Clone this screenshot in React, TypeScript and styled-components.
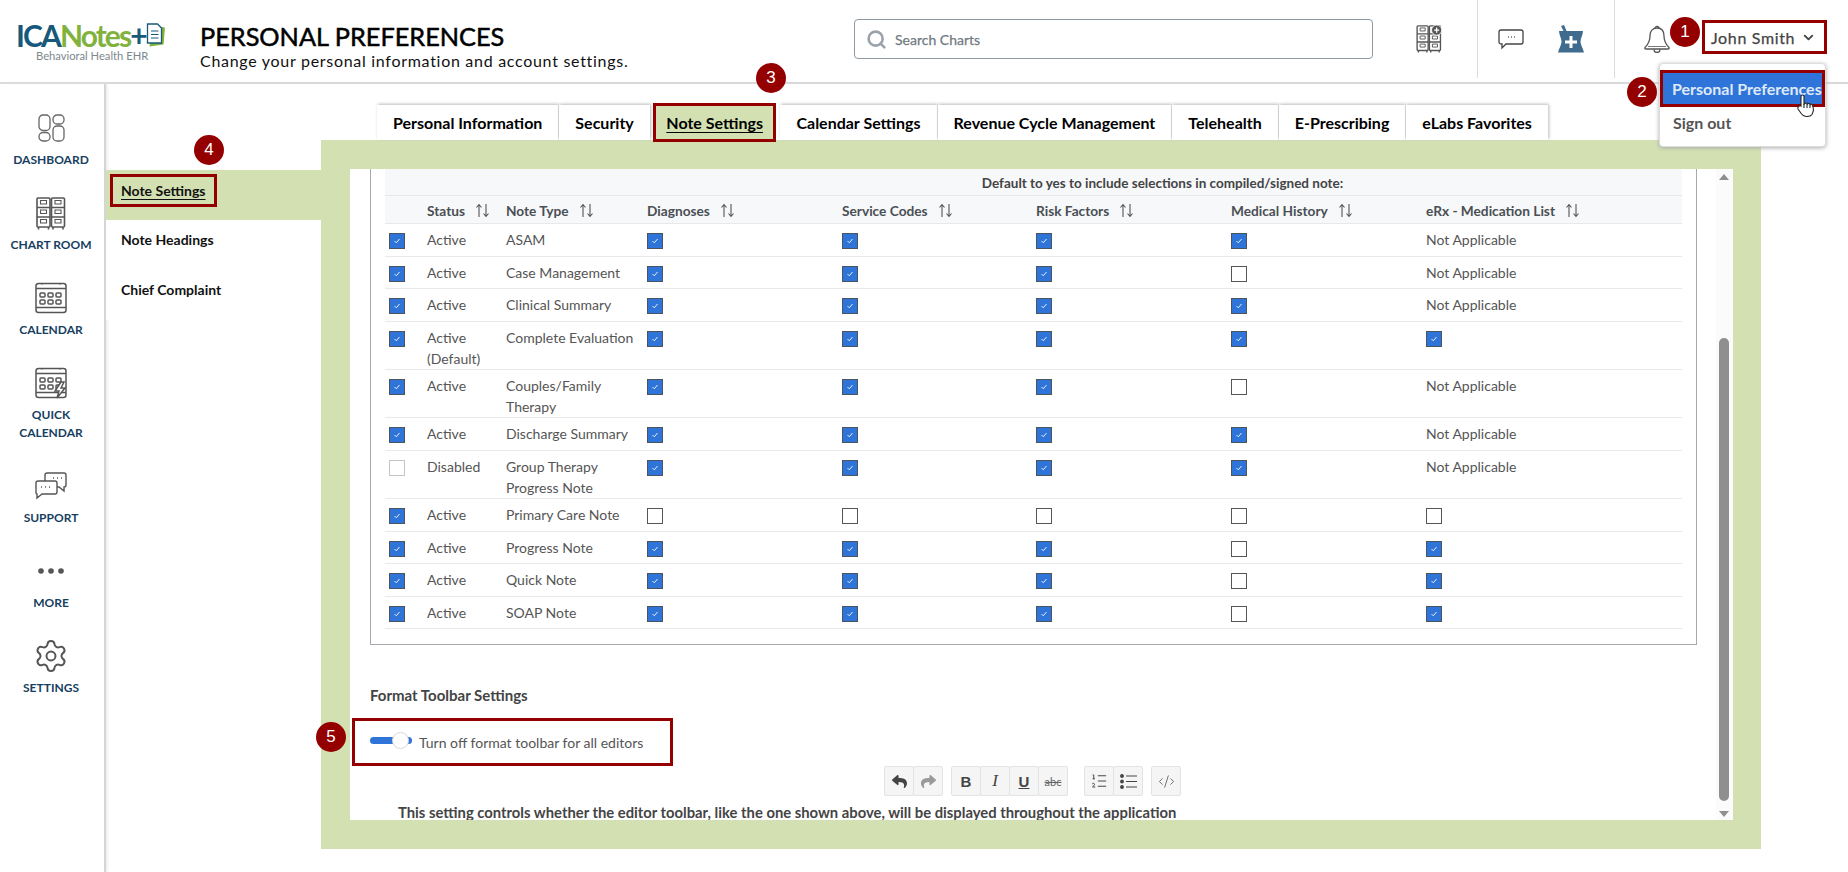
import React from "react";
import styled, { createGlobalStyle } from "styled-components";
import { ChevronDown, CodeXml, ListOrdered, Search, Settings } from "lucide-react";
import { FaReply, FaShare } from "react-icons/fa";

const GREEN = "#d3e1b2";
const RED = "#940000";

const Global = createGlobalStyle`
  html, body { margin: 0; padding: 0; background: #fff; }
  body { font-family: Lato, "Liberation Sans", sans-serif; font-size: 14px; color: #555; }
  * { box-sizing: border-box; }
`;

const Page = styled.div`
  position: relative;
  width: 1848px;
  height: 872px;
  overflow: hidden;
`;

const Header = styled.header`
  height: 84px;
  border-bottom: 2px solid #d9d9d9;
  display: flex;
  align-items: stretch;
`;
const LogoBox = styled.div`
  width: 200px;
  padding: 20px 0 0 16px;
`;
const LogoLine = styled.div`
  display: flex;
  align-items: center;
  height: 30px;
  font-size: 30px;
  font-weight: 700;
  letter-spacing: -1.9px;
  line-height: 30px;
`;
const LogoIca = styled.span`
  color: #17597a;
`;
const LogoNotes = styled.span`
  color: #82b23e;
`;
const LogoPlus = styled.span`
  color: #17597a;
`;
const LogoSub = styled.div`
  margin-left: 20px;
  font-size: 11.2px;
  line-height: 12px;
  color: #7d878d;
`;
const TitleBox = styled.div`
  width: 654px;
  padding-top: 22px;
`;
const Title = styled.h1`
  margin: 0;
  font-size: 25.3px;
  line-height: 29px;
  font-weight: 400;
  -webkit-text-stroke: 0.5px #000;
  color: #000;
`;
const Subtitle = styled.div`
  font-size: 16px;
  line-height: 19px;
  letter-spacing: 0.71px;
  color: #111;
`;
const SearchBox = styled.div`
  width: 519px;
  height: 40px;
  margin-top: 19px;
  border: 1px solid #8f99a3;
  border-radius: 4px;
  display: flex;
  align-items: center;
  gap: 8px;
  padding-left: 11px;
  font-size: 14px;
  -webkit-text-stroke: 0.25px #727a82;
  color: #727a82;
`;
const IconCell = styled.div<{ $w: number; $pl: number; $border?: boolean }>`
  width: ${(p) => p.$w}px;
  padding-left: ${(p) => p.$pl}px;
  height: 78px;
  display: flex;
  align-items: center;
  border-right: ${(p) => (p.$border ? "1px solid #dcdcdc" : "none")};
`;
const Spacer = styled.span`
  width: 34px;
`;
const UserBox = styled.div`
  width: 125px;
  height: 34px;
  margin: 20px 0 0 31px;
  border: 3px solid ${RED};
  display: flex;
  align-items: center;
  padding-left: 6px;
  gap: 6px;
  font-size: 16px;
  -webkit-text-stroke: 0.25px #444;
  color: #444;
  letter-spacing: 0.65px;
`;

const Body = styled.div`
  display: flex;
  height: 788px;
`;
const SideNav = styled.nav`
  width: 106px;
  padding: 24px 2px 0 0;
  border-right: 2px solid #d5d5d5;
  box-shadow: 1px 0 3px #e4e4e4;
  flex: none;
`;
const NavItem = styled.div`
  display: flex;
  flex-direction: column;
  align-items: center;
  padding-bottom: 24px;
`;
const NavIcon = styled.div`
  height: 40px;
  margin-bottom: 3px;
  display: flex;
  align-items: center;
  justify-content: center;
  color: #555;
`;
const NavLabel = styled.div`
  font-size: 12px;
  line-height: 18px;
  font-weight: 700;
  color: #17405f;
  text-align: center;
`;

const Content = styled.main`
  flex: 1;
  min-width: 0;
`;
const TabRow = styled.div`
  display: flex;
  align-items: flex-end;
  gap: 1px;
  height: 56px;
  padding-left: 271px;
`;
const Tab = styled.div<{ $active?: boolean }>`
  position: relative;
  z-index: 1;
  height: ${(p) => (p.$active ? 39 : 35)}px;
  margin: ${(p) => (p.$active ? "0 3px 0 2px" : "0")};
  padding: 0 ${(p) => (p.$active ? 10.5 : 16)}px;
  display: flex;
  align-items: center;
  font-size: 16px;
  font-weight: 700;
  color: #000;
  background: ${(p) => (p.$active ? GREEN : "#fff")};
  border: ${(p) => (p.$active ? `3px solid ${RED}` : "none")};
  box-shadow: ${(p) => (p.$active ? "none" : "1px -1px 3px #bbb")};
  transform: ${(p) => (p.$active ? "translateY(2px)" : "none")};
  text-decoration: ${(p) => (p.$active ? "underline" : "none")};
  text-underline-offset: 3px;
`;
const Lower = styled.div`
  display: flex;
`;
const SubMenu = styled.div`
  width: 215px;
  padding-top: 30px;
  flex: none;
`;
const SubItem = styled.div<{ $active?: boolean }>`
  height: 50px;
  display: flex;
  align-items: center;
  padding-left: ${(p) => (p.$active ? 4 : 15)}px;
  padding-bottom: ${(p) => (p.$active ? 10 : 12)}px;
  background: ${(p) => (p.$active ? GREEN : "#fff")};
  font-size: 14px;
  font-weight: 700;
  color: #111;
`;
const SubActiveText = styled.span`
  height: 33px;
  display: flex;
  align-items: center;
  padding: 0 8px;
  border: 3px solid ${RED};
  text-decoration: underline;
  text-underline-offset: 3px;
`;
const GreenPanel = styled.div`
  width: 1440px;
  height: 709px;
  padding: 29px 28px 29px 29px;
  background: ${GREEN};
`;
const WhitePanel = styled.div`
  height: 651px;
  display: flex;
  background: #fff;
`;
const Scroller = styled.div`
  flex: 1;
  min-width: 0;
  padding-left: 20px;
  overflow: hidden;
`;
const ScrollBar = styled.div`
  width: 17px;
  position: relative;
  background: #fbfbfb;
  flex: none;
`;
const ScrollThumb = styled.div`
  position: absolute;
  left: 3px;
  right: 4px;
  top: 169px;
  bottom: 19px;
  background: #8f8f8f;
  border-radius: 5px;
`;
const ScrollArrow = styled.div<{ $down?: boolean }>`
  position: absolute;
  left: 3px;
  ${(p) => (p.$down ? "bottom: 3px;" : "top: 5px;")}
  width: 0;
  height: 0;
  border-left: 5px solid transparent;
  border-right: 5px solid transparent;
  border-${(p) => (p.$down ? "top" : "bottom")}: 6px solid #8f8f8f;
`;
const Fieldset = styled.div`
  width: 1327px;
  height: 476px;
  padding: 0 14px;
  border: 1px solid #a4a9ad;
  border-top: none;
`;
const CaptionRow = styled.div`
  height: 27px;
  background: #f7f8fa;
  border-bottom: 1px solid #e6e8ea;
  font-size: 13.5px;
  font-weight: 700;
  color: #444;
  display: flex;
  align-items: center;
  justify-content: center;
  padding-top: 1px;
  padding-left: 258px;
`;
const COLS = "38px 79px 141px 195px 194px 195px 195px 1fr";
const HeadRow = styled.div`
  display: grid;
  grid-template-columns: ${COLS};
  height: 28px;
  background: #f7f8fa;
  border-bottom: 1px solid #e6e8ea;
`;
const HeadCell = styled.div`
  display: flex;
  align-items: center;
  gap: 10px;
  padding: 1px 0 0 4px;
  font-size: 13.7px;
  font-weight: 700;
  color: #4a4f54;
`;
const Row = styled.div<{ $tall?: boolean }>`
  display: grid;
  grid-template-columns: ${COLS};
  height: ${(p) => (p.$tall ? 48.4 : 32.5)}px;
  border-bottom: 1px solid #e8e9ea;
`;
const Cell = styled.div`
  padding: 5px 4px 0;
  line-height: 21px;
  font-size: 14px;
  color: #555;
`;
const BoxCell = styled.div`
  padding: 9px 0 0 3.5px;
`;
const Check = styled.span<{ $on?: boolean; $dim?: boolean }>`
  width: 16px;
  height: 16px;
  display: flex;
  align-items: center;
  justify-content: center;
  background: ${(p) => (p.$on ? "#2f74d8" : "#fff")};
  border: 1px solid ${(p) => (p.$on ? "#4a5560" : p.$dim ? "#c4c4c4" : "#555")};
`;
const SectionTitle = styled.div`
  margin-top: 40px;
  font-size: 15px;
  line-height: 20px;
  font-weight: 700;
  color: #444;
`;
const ToggleBox = styled.div`
  width: 321px;
  height: 48px;
  margin: 13px 0 0 -18px;
  padding: 0 0 0 15px;
  border: 3px solid ${RED};
  display: flex;
  align-items: center;
  gap: 7px;
  color: #555;
  font-size: 14px;
`;
const Toggle = styled.div`
  position: relative;
  width: 42px;
  height: 7px;
  border-radius: 4px;
  background: #2f74d8;
  margin-top: -4px;
`;
const Knob = styled.div`
  position: absolute;
  left: 22px;
  top: -5px;
  width: 17px;
  height: 17px;
  border-radius: 50%;
  background: #fff;
  border: 1px solid #d8d8d8;
`;
const Toolbar = styled.div`
  display: flex;
  margin: 0 0 0 514px;
`;
const ToolGroup = styled.div<{ $gap: number }>`
  display: flex;
  margin-right: ${(p) => p.$gap}px;
`;
const ToolBtn = styled.div<{ $dim?: boolean }>`
  width: 30px;
  height: 30px;
  display: flex;
  align-items: center;
  justify-content: center;
  background: #f5f5f5;
  border: 1px solid #e3e3e3;
  border-radius: 2px;
  margin-right: -1px;
  color: ${(p) => (p.$dim ? "#999" : "#444")};
  font-size: 14px;
`;
const Bold = styled.b`
  font-family: "Liberation Sans", sans-serif;
  font-size: 15px;
`;
const Italic = styled.i`
  font-family: "Liberation Serif", serif;
  font-size: 17px;
`;
const Under = styled.u`
  font-family: "Liberation Sans", sans-serif;
  font-weight: 700;
  font-size: 15px;
`;
const Strike = styled.s`
  font-size: 11px;
  color: #666;
`;
const Notice = styled.div`
  margin: 6px 0 0 28px;
  font-size: 14.8px;
  font-weight: 700;
  line-height: 20px;
  color: #444;
  white-space: nowrap;
`;

// overlays
const Marker = styled.div<{ $x: number; $y: number }>`
  position: absolute;
  left: ${(p) => p.$x - 15}px;
  top: ${(p) => p.$y - 15}px;
  width: 30px;
  height: 30px;
  border-radius: 50%;
  background: ${RED};
  color: #fff;
  font-family: "Liberation Sans", sans-serif;
  font-size: 17px;
  display: flex;
  align-items: center;
  justify-content: center;
  z-index: 5;
`;
const Dropdown = styled.div`
  position: absolute;
  left: 1659px;
  top: 63px;
  width: 167px;
  height: 84px;
  padding-top: 6px;
  background: #fff;
  border: 1px solid #ddd;
  border-radius: 4px;
  box-shadow: 0 1px 4px #aaa;
  z-index: 4;
`;
const DropActive = styled.div`
  height: 37px;
  border: 3px solid ${RED};
  background: #2f74d8;
  color: #dfe9f8;
  font-size: 16px;
  font-weight: 700;
  padding-left: 9px;
  line-height: 31px;
  white-space: nowrap;
  overflow: hidden;
`;
const DropItem = styled.div`
  padding: 3px 0 0 13px;
  font-size: 16px;
  line-height: 26px;
  font-weight: 700;
  color: #555;
`;
const Hand = styled.svg`
  position: absolute;
  left: 1796px;
  top: 94px;
  z-index: 6;
`;

const Dashboard = () => (
  <svg width="27" height="28" viewBox="0 0 27 28" fill="none" stroke="#666" strokeWidth="1.3">
    <rect x="1" y="1" width="11" height="15.500" rx="4" />
    <rect x="15" y="1" width="11" height="9" rx="4" />
    <rect x="1" y="18.500" width="11" height="8.500" rx="4" />
    <rect x="15" y="12" width="11" height="15" rx="4" />
  </svg>
);

const Cabinets = ({ w = 30, h = 33, plus }: { w?: number; h?: number; plus?: boolean }) => (
  <svg width={w} height={h} viewBox="0 0 30 33" fill="none" stroke="#555" strokeWidth="1.6">
    {[1, 15.5].map((x) => (
      <g key={x}>
        <rect x={x} y="1" width="13" height="29" rx="1" />
        <path d={`M${x} 10.500h13M${x} 20h13M${x + 1.500} 30v2.500M${x + 11.500} 30v2.500`} />
        {[3.500, 13, 22.500].map((y) => (
          <path key={y} d={`M${x + 3.500} ${y}h6v3.500h-6z`} strokeWidth="1.100" />
        ))}
      </g>
    ))}
    {plus && (
      <g>
        <circle cx="24" cy="6" r="6" fill="#555" stroke="#fff" strokeWidth="1" />
        <path d="M21 6h6M24 3v6" stroke="#fff" strokeWidth="1.500" />
      </g>
    )}
  </svg>
);

const Calendar = ({ bolt }: { bolt?: boolean }) => (
  <svg width="33" height="32" viewBox="0 0 33 32" fill="none" stroke="#555" strokeWidth="1.5">
    <rect x="1" y="1.5" width="30" height="29" rx="2.5" />
    <path d="M1 6.500h30M1 25.500h30M7 1v1.500M25 1v1.500" />
    {[5, 13, 21].map((x) =>
      [11, 18].map((y) => <rect key={`${x}${y}`} x={x} y={y} width="5" height="4" rx="1" />)
    )}
    {bolt && <path d="M26 15l-6 9h4l-2 7 8-10h-4l3-6z" fill="#fff" />}
  </svg>
);

const Support = () => (
  <svg width="32" height="28" viewBox="0 0 32 28" fill="none" stroke="#555" strokeWidth="1.4">
    <path d="M10 9V3a2 2 0 0 1 2-2h17a2 2 0 0 1 2 2v10a2 2 0 0 1-2 2v4l-5-4h-3" />
    <path d="M3 9h17a2 2 0 0 1 2 2v9a2 2 0 0 1-2 2H7l-5 4v-4a1.500 1.500 0 0 1-1-2v-9a2 2 0 0 1 2-2z" fill="#fff" />
    <path d="M6 15h1M10 15h1M14 15h1M18 6h1M22 6h1M26 6h1" />
  </svg>
);

const Dots = () => (
  <svg width="26" height="6" viewBox="0 0 26 6" fill="#555">
    <circle cx="3" cy="3" r="2.800" />
    <circle cx="13" cy="3" r="2.800" />
    <circle cx="23" cy="3" r="2.800" />
  </svg>
);

const ChatIcon = () => (
  <svg width="26" height="21" viewBox="0 0 26 21" fill="none" stroke="#444" strokeWidth="1.300">
    <path d="M3 1h20a2 2 0 0 1 2 2v10a2 2 0 0 1-2 2H8l-4 4v-4H3a2 2 0 0 1-2-2V3a2 2 0 0 1 2-2z" />
    <path d="M10 8h1M13 8h1M16 8h1" stroke="#666" />
  </svg>
);

const Mortar = () => (
  <svg width="26" height="28" viewBox="0 0 26 28">
    <path d="M3 1l3-1 3 7H6z" fill="#3f6b8f" />
    <path d="M1 6h24c0 4-2.500 7-2.500 10.500S25 23 26 27.500H0C1 23 3.500 20 3.500 16.500S1 10 1 6z" fill="#3f6b8f" />
    <path d="M11.500 11h3v4.500h4.500v3h-4.500V23h-3v-4.500H7v-3h4.500z" fill="#fff" />
  </svg>
);

const BellIcon = () => (
  <svg width="28" height="28" viewBox="0 0 28 28" fill="none" stroke="#555" strokeWidth="1.300">
    <path d="M12 3.500a2 2 0 1 1 4 0" />
    <path d="M14 3c-5 0-7 3.500-7 8 0 5-1.500 8-5 11.500-.5 1 0 1.500 1 1.500h22c1 0 1.500-.5 1-1.500-3.500-3.500-5-6.500-5-11.500 0-4.500-2-8-7-8z" />
    <path d="M11 24.500a3 3 0 0 0 6 0" />
    <path d="M5 21.500h18" strokeWidth="0.800" />
  </svg>
);

const LogoDoc = () => (
  <svg width="21" height="26" viewBox="0 0 21 26" fill="none">
    <path d="M6 4l13 1.500-1.500 17-14 2z" fill="#82b23e" />
    <path d="M1.500 2h10l4 4v15h-14z" fill="#fff" stroke="#17597a" strokeWidth="1.300" />
    <path d="M5 9h7.500M5 12.500h7.500M5 16h7.500" stroke="#17597a" strokeWidth="1" />
  </svg>
);

const SortIcon = () => (
  <svg width="15" height="15" viewBox="0 0 15 15" fill="none" stroke="#555" strokeWidth="1.100">
    <path d="M4 14V2M1.500 4.500L4 1.500l2.500 3M11 1v12.500M8.500 10.500l2.500 3 2.500-3" />
  </svg>
);

const BulletIcon = () => (
  <svg width="17" height="15" viewBox="0 0 17 15" stroke="#444" strokeWidth="1.200" fill="#444">
    <circle cx="2" cy="2" r="1.300" />
    <circle cx="2" cy="7.500" r="1.300" />
    <circle cx="2" cy="13" r="1.300" />
    <path d="M6 2h11M6 7.500h11M6 13h11" />
  </svg>
);

const Tick = () => (
  <svg width="8" height="8" viewBox="0 0 8 8" fill="none" stroke="#e8f0fb" strokeWidth="1">
    <path d="M1.500 4l1.800 1.800L6.500 2" />
  </svg>
);

const navItems: { label: React.ReactNode; icon: React.ReactNode }[] = [
  { label: "DASHBOARD", icon: <Dashboard /> },
  { label: "CHART ROOM", icon: <Cabinets /> },
  { label: "CALENDAR", icon: <Calendar /> },
  { label: <>QUICK<br />CALENDAR</>, icon: <Calendar bolt /> },
  { label: "SUPPORT", icon: <Support /> },
  { label: "MORE", icon: <Dots /> },
  { label: "SETTINGS", icon: <Settings size={36} strokeWidth={1.300} color="#555" /> },
];

const tabs = [
  "Personal Information",
  "Security",
  "Note Settings",
  "Calendar Settings",
  "Revenue Cycle Management",
  "Telehealth",
  "E-Prescribing",
  "eLabs Favorites",
];

const columns = ["Status", "Note Type", "Diagnoses", "Service Codes", "Risk Factors", "Medical History", "eRx - Medication List"];

interface NoteRow {
  on: boolean;
  status: React.ReactNode;
  type: React.ReactNode;
  flags: [boolean, boolean, boolean, boolean];
  erx: boolean | null;
  tall?: boolean;
}

const rows: NoteRow[] = [
  { on: true, status: "Active", type: "ASAM", flags: [true, true, true, true], erx: null },
  { on: true, status: "Active", type: "Case Management", flags: [true, true, true, false], erx: null },
  { on: true, status: "Active", type: "Clinical Summary", flags: [true, true, true, true], erx: null },
  { on: true, status: <>Active<br />(Default)</>, type: "Complete Evaluation", flags: [true, true, true, true], erx: true, tall: true },
  { on: true, status: "Active", type: <>Couples/Family<br />Therapy</>, flags: [true, true, true, false], erx: null, tall: true },
  { on: true, status: "Active", type: "Discharge Summary", flags: [true, true, true, true], erx: null },
  { on: false, status: "Disabled", type: <>Group Therapy<br />Progress Note</>, flags: [true, true, true, true], erx: null, tall: true },
  { on: true, status: "Active", type: "Primary Care Note", flags: [false, false, false, false], erx: false },
  { on: true, status: "Active", type: "Progress Note", flags: [true, true, true, false], erx: true },
  { on: true, status: "Active", type: "Quick Note", flags: [true, true, true, false], erx: true },
  { on: true, status: "Active", type: "SOAP Note", flags: [true, true, true, false], erx: true },
];

const Box = ({ on, dim }: { on: boolean; dim?: boolean }) => (
  <BoxCell>
    <Check $on={on} $dim={dim}>{on && <Tick />}</Check>
  </BoxCell>
);

export default function App() {
  return (
    <Page>
      <Global />
      <Header>
        <LogoBox>
          <LogoLine>
            <LogoIca>ICA</LogoIca>
            <LogoNotes>Notes</LogoNotes>
            <LogoPlus>+</LogoPlus>
            <LogoDoc />
          </LogoLine>
          <LogoSub>Behavioral Health EHR</LogoSub>
        </LogoBox>
        <TitleBox>
          <Title>PERSONAL PREFERENCES</Title>
          <Subtitle>Change your personal information and account settings.</Subtitle>
        </TitleBox>
        <SearchBox>
          <Search size={21} strokeWidth={3} color="#9aa2aa" />
          Search Charts
        </SearchBox>
        <IconCell $w={105} $pl={43} $border>
          <Cabinets w={26} h={28} plus />
        </IconCell>
        <IconCell $w={137} $pl={20} $border>
          <ChatIcon />
          <Spacer />
          <Mortar />
        </IconCell>
        <IconCell $w={56} $pl={28}>
          <BellIcon />
        </IconCell>
        <UserBox>
          John Smith
          <ChevronDown size={15} strokeWidth={3} color="#444" />
        </UserBox>
      </Header>
      <Body>
        <SideNav>
          {navItems.map((item, i) => (
            <NavItem key={i}>
              <NavIcon>{item.icon}</NavIcon>
              <NavLabel>{item.label}</NavLabel>
            </NavItem>
          ))}
        </SideNav>
        <Content>
          <TabRow>
            {tabs.map((t) => (
              <Tab key={t} $active={t === "Note Settings"}>{t}</Tab>
            ))}
          </TabRow>
          <Lower>
            <SubMenu>
              <SubItem $active><SubActiveText>Note Settings</SubActiveText></SubItem>
              <SubItem>Note Headings</SubItem>
              <SubItem>Chief Complaint</SubItem>
            </SubMenu>
            <GreenPanel>
              <WhitePanel>
                <Scroller>
                  <Fieldset>
                    <CaptionRow>Default to yes to include selections in compiled/signed note:</CaptionRow>
                    <HeadRow>
                      <span />
                      {columns.map((c) => (
                        <HeadCell key={c}>{c}<SortIcon /></HeadCell>
                      ))}
                    </HeadRow>
                    {rows.map((r, i) => (
                      <Row key={i} $tall={r.tall}>
                        <Box on={r.on} dim={!r.on} />
                        <Cell>{r.status}</Cell>
                        <Cell>{r.type}</Cell>
                        {r.flags.map((f, j) => <Box key={j} on={f} />)}
                        {r.erx === null ? <Cell>Not Applicable</Cell> : <Box on={r.erx} />}
                      </Row>
                    ))}
                  </Fieldset>
                  <SectionTitle>Format Toolbar Settings</SectionTitle>
                  <ToggleBox>
                    <Toggle><Knob /></Toggle>
                    Turn off format toolbar for all editors
                  </ToggleBox>
                  <Toolbar>
                    <ToolGroup $gap={9}>
                      <ToolBtn><FaReply size={15} /></ToolBtn>
                      <ToolBtn $dim><FaShare size={15} /></ToolBtn>
                    </ToolGroup>
                    <ToolGroup $gap={17}>
                      <ToolBtn><Bold>B</Bold></ToolBtn>
                      <ToolBtn><Italic>I</Italic></ToolBtn>
                      <ToolBtn><Under>U</Under></ToolBtn>
                      <ToolBtn><Strike>abc</Strike></ToolBtn>
                    </ToolGroup>
                    <ToolGroup $gap={9}>
                      <ToolBtn><ListOrdered size={18} strokeWidth={1.300} /></ToolBtn>
                      <ToolBtn><BulletIcon /></ToolBtn>
                    </ToolGroup>
                    <ToolGroup $gap={0}>
                      <ToolBtn><CodeXml size={17} strokeWidth={1.300} color="#666" /></ToolBtn>
                    </ToolGroup>
                  </Toolbar>
                  <Notice>This setting controls whether the editor toolbar, like the one shown above, will be displayed throughout the application</Notice>
                </Scroller>
                <ScrollBar>
                  <ScrollArrow />
                  <ScrollThumb />
                  <ScrollArrow $down />
                </ScrollBar>
              </WhitePanel>
            </GreenPanel>
          </Lower>
        </Content>
      </Body>

      <Dropdown>
        <DropActive>Personal Preferences</DropActive>
        <DropItem>Sign out</DropItem>
      </Dropdown>
      <Hand width="20" height="24" viewBox="0 0 20 24" fill="#fff" stroke="#222" strokeWidth="1.100">
        <path d="M5 12V2.500a1.500 1.500 0 0 1 3 0V10l1-.5a1.500 1.500 0 0 1 2.500.5 1.500 1.500 0 0 1 2.500.5 1.500 1.500 0 0 1 2.500 1c1 2 1 6-.5 9-1 1.500-2 2-5 2-3.500 0-5-1.500-6.500-4L2 15c-1-2 2-4 3-3z" />
        <path d="M8 10v4M11 10v4M14 11v3" />
      </Hand>
      <Marker $x={1685} $y={32}>1</Marker>
      <Marker $x={1642} $y={92}>2</Marker>
      <Marker $x={771} $y={78}>3</Marker>
      <Marker $x={209} $y={150}>4</Marker>
      <Marker $x={331} $y={737}>5</Marker>
    </Page>
  );
}
